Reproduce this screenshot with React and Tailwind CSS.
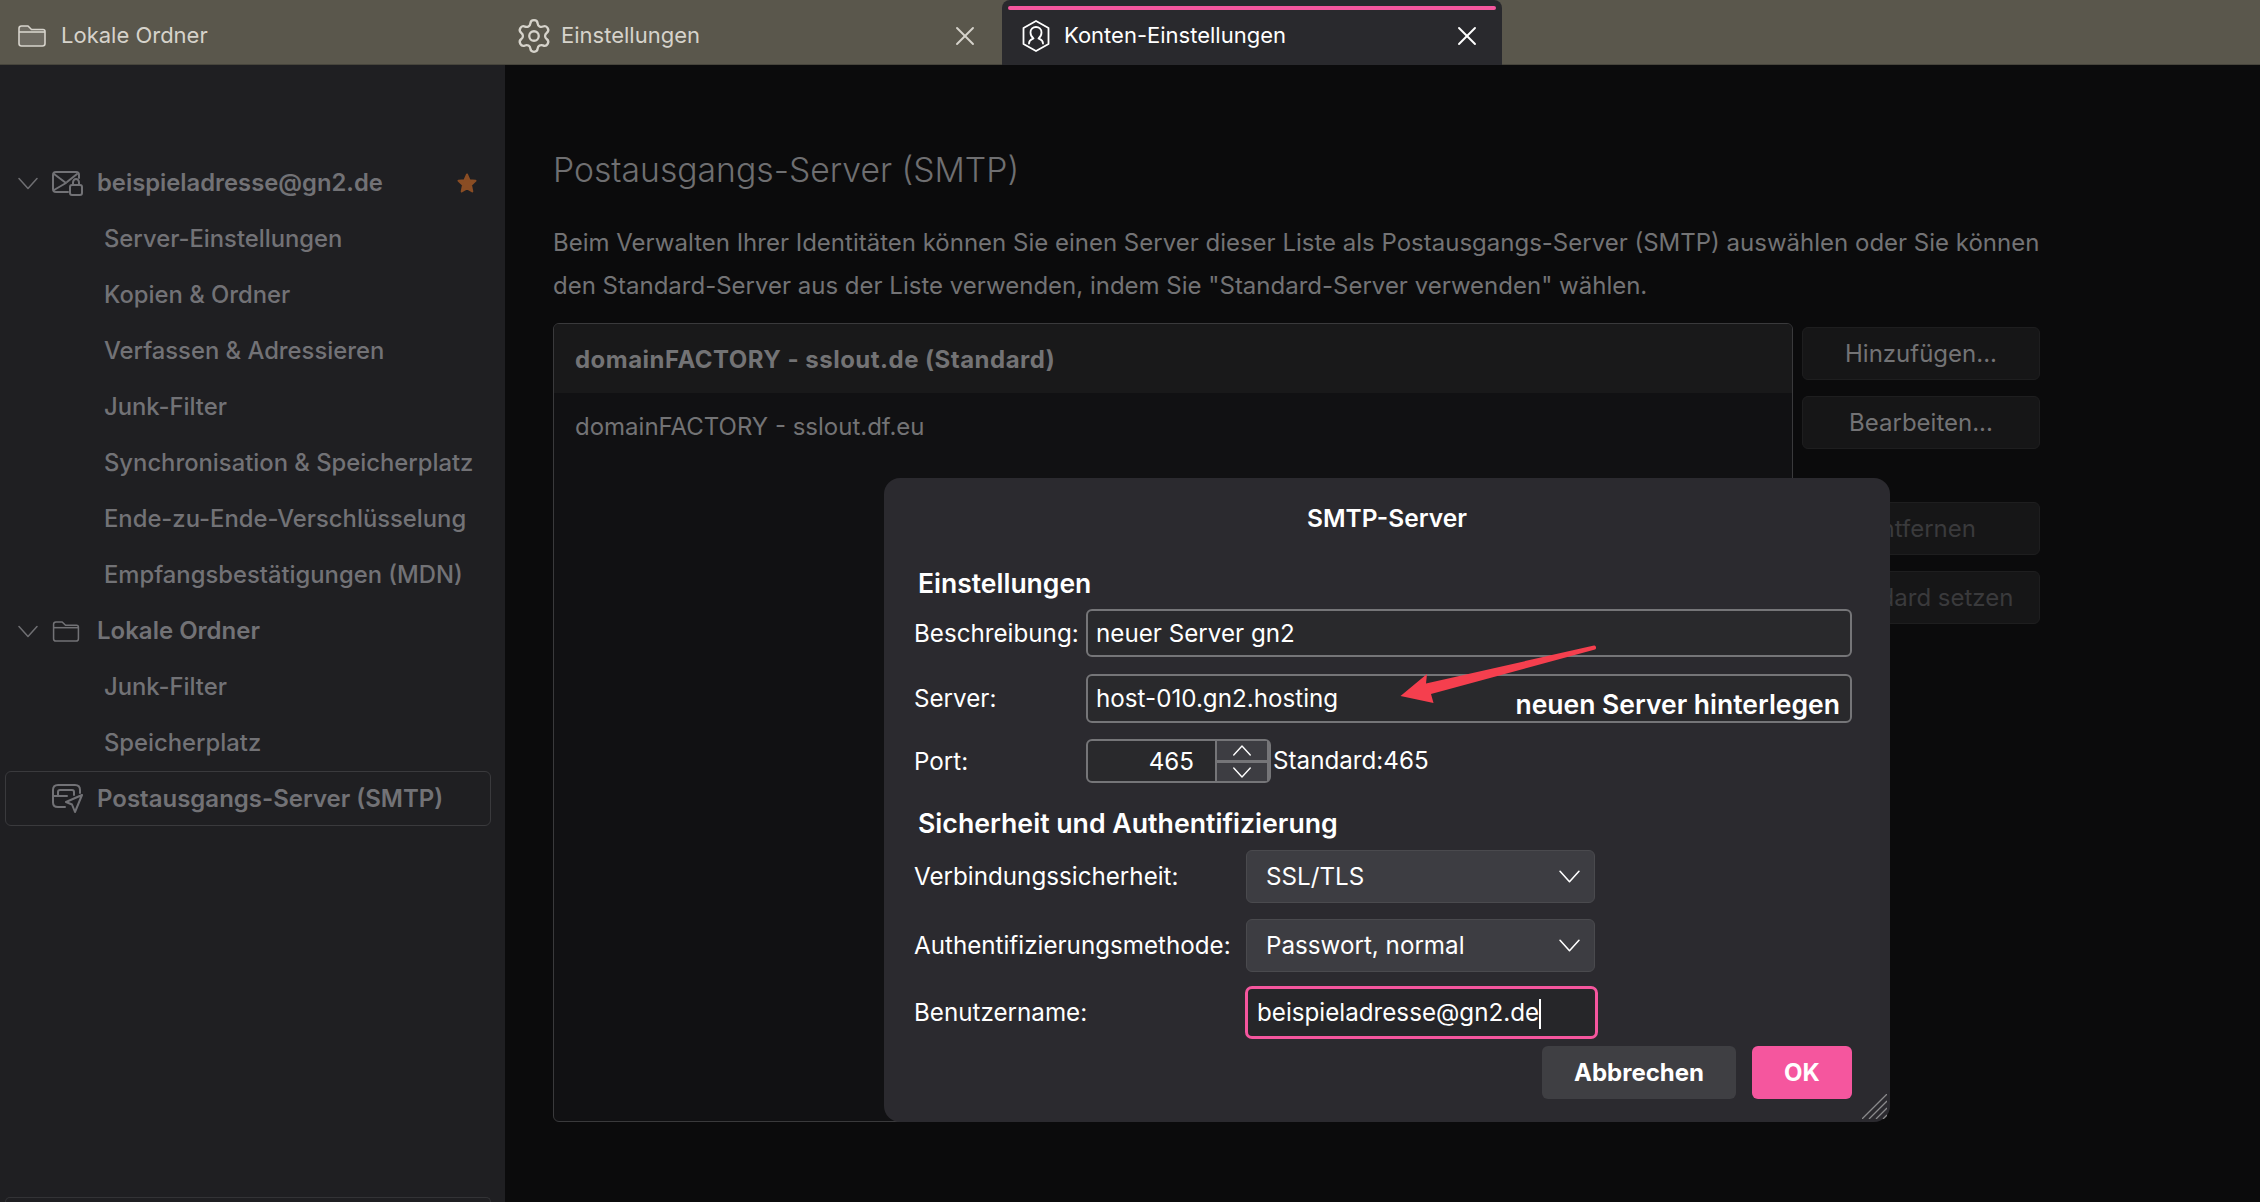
import React from 'react';
import { Settings, X } from 'lucide-react';

const FolderIcon = ({ className, fill = 'none' }) => (
  <svg className={className} viewBox="0 0 28 22" fill={fill} stroke="currentColor" strokeWidth="1.6" strokeLinejoin="round">
    <path d="M1 3.5C1 2 2 1 3.5 1H10l3.5 3.5H25C26 4.5 27 5.5 27 6.5V18.5C27 20 26 21 24.5 21H3.5C2 21 1 20 1 18.5Z" />
    <path d="M1 7H27" fill="none" />
  </svg>
);

const Chev = ({ className, up }) => (
  <svg className={className} viewBox="0 0 20 12" fill="none" stroke="currentColor" strokeWidth="1.5" strokeLinecap="round" strokeLinejoin="round">
    <path d={up ? 'M1 11L10 1L19 11' : 'M1 1L10 11L19 1'} />
  </svg>
);

const AccountIcon = () => (
  <svg className="w-[31px] h-[25px]" viewBox="0 0 31 25" fill="none" stroke="currentColor" strokeWidth="2" strokeLinejoin="round" strokeLinecap="round">
    <path d="M16 21H4C2 21 1 20 1 18V4C1 2 2 1 4 1H24C26 1 27 2 27 4V7" />
    <path d="M2 3L14 12L2 19" />
    <path d="M15 11L25 3" />
    <rect x="18" y="14" width="12" height="10" rx="2" />
    <path d="M21 14V11.500C21 9.500 22.500 8 24 8C25.500 8 27 9.500 27 11.500V14" />
  </svg>
);

const SmtpIcon = () => (
  <svg className="w-[31px] h-[30px]" viewBox="0 0 31 30" fill="none" stroke="currentColor" strokeWidth="2" strokeLinejoin="round" strokeLinecap="round">
    <path d="M13 23H6C2.500 23 1 21.500 1 18.500V6C1 3 2.500 1 6 1H23C26 1 28 3 28 6V9" />
    <path d="M6 11V8C6 6.500 7 6 8 6H20C21.500 6 22 7 22 8V11" />
    <path d="M1 12H15" />
    <path d="M30 11L14 18L20 20.500L23 28Z" />
  </svg>
);

const AccountsTabIcon = () => (
  <svg className="w-[28px] h-[32px]" viewBox="0 0 28 32" fill="none" stroke="currentColor" strokeWidth="1.8" strokeLinejoin="round" strokeLinecap="round">
    <path d="M14 1L26.5 8V24L14 31L1.500 24V8Z" />
    <path d="M7 23.500C7 20 9.500 19.500 11.500 18.500C9.500 17 8.500 14.500 8.500 12.500C8.500 9 11 7 14 7C17 7 19.500 9 19.500 12.500C19.500 14.500 18.500 17 16.500 18.500C18.500 19.500 21 20 21 23.500" />
  </svg>
);

const Star = () => (
  <svg className="w-[20px] h-[20px] text-[#8a4d24]" viewBox="0 0 20 20" fill="currentColor" stroke="currentColor" strokeWidth="2" strokeLinejoin="round">
    <path d="M10 1.500L12.500 7.200L18.500 7.800L14 12L15.300 18.500L10 15.300L4.700 18.500L6 12L1.500 7.800L7.500 7.200Z" />
  </svg>
);

const Tab = ({ icon, label, closable, className = '' }) => (
  <div className={`flex items-center h-[65px] pt-[6px] text-[#d6d3cb] ${className}`}>
    {icon}
    <span className="text-[22px]">{label}</span>
    {closable && <X className="w-[32px] h-[32px] ml-auto" strokeWidth={1.4} />}
  </div>
);

const TabBar = () => (
  <div className="flex h-[65px] shrink-0 bg-[#5a574c] border-b border-[#47453c]">
    <Tab
      className="w-[498px] pl-[18px]"
      icon={<FolderIcon className="w-[28px] h-[22px] mr-[15px] text-[#d6d3cb]" fill="#6f6c63" />}
      label="Lokale Ordner"
    />
    <Tab
      className="w-[504px] pl-[18px] pr-[21px]"
      closable
      icon={<Settings className="w-[38px] h-[38px] mr-[8px] -ml-[1px]" strokeWidth={1.45} />}
      label="Einstellungen"
    />
    <div className="relative flex items-center w-[500px] h-[65px] pt-[6px] pl-[20px] pr-[19px] bg-[#29292d] rounded-t-[8px] text-white">
      <div className="absolute left-[6px] right-[6px] top-[6px] h-[4px] rounded-[2px] bg-[#f5569e]" />
      <AccountsTabIcon />
      <span className="ml-[14px] text-[22px]">Konten-Einstellungen</span>
      <X className="w-[32px] h-[32px] ml-auto" strokeWidth={1.4} />
    </div>
  </div>
);

const Chevron = () => <Chev className="w-[20px] h-[13px] shrink-0 text-[#6f6f73]" />;

const SubItem = ({ children }) => (
  <div className="flex items-center h-[56px] pl-[104px] text-[23.8px] text-[#727276]">{children}</div>
);

const Sidebar = () => (
  <aside className="flex flex-col relative w-[505px] shrink-0 pt-[90px] bg-[#1f1f22] font-medium text-[#727276]">
    <div className="flex items-center h-[56px] pl-[18px] pr-[28px]">
      <Chevron />
      <span className="ml-[14px]"><AccountIcon /></span>
      <span className="ml-[14px] text-[23.8px] font-semibold">beispieladresse@gn2.de</span>
      <span className="ml-auto"><Star /></span>
    </div>
    <SubItem>Server-Einstellungen</SubItem>
    <SubItem>Kopien &amp; Ordner</SubItem>
    <SubItem>Verfassen &amp; Adressieren</SubItem>
    <SubItem>Junk-Filter</SubItem>
    <SubItem>Synchronisation &amp; Speicherplatz</SubItem>
    <SubItem>Ende-zu-Ende-Verschlüsselung</SubItem>
    <SubItem>Empfangsbestätigungen (MDN)</SubItem>
    <div className="flex items-center h-[56px] pl-[18px]">
      <Chevron />
      <span className="ml-[14px]"><FolderIcon className="w-[28px] h-[21px]" /></span>
      <span className="ml-[17px] text-[24px] font-semibold">Lokale Ordner</span>
    </div>
    <SubItem>Junk-Filter</SubItem>
    <SubItem>Speicherplatz</SubItem>
    <div className="flex items-center h-[55px] ml-[5px] w-[486px] pl-[46px] border-[1.5px] border-[#3a3a3d] rounded-[6px]">
      <SmtpIcon />
      <span className="ml-[14px] text-[24px] font-semibold">Postausgangs-Server (SMTP)</span>
    </div>
    <div className="absolute left-[5px] bottom-0 w-[486px] h-[5px] rounded-t-[6px] border-t-[1.5px] border-x-[1.5px] border-[#333336]" />
  </aside>
);

const SideButton = ({ children, muted, className = '' }) => (
  <div className={`flex items-center justify-center w-[238px] h-[53px] rounded-[6px] bg-[#161617] border-[1.5px] border-[#1e1e1f] text-[24px] ${muted ? 'text-[#3a3a3c]' : 'text-[#737375]'} ${className}`}>
    {children}
  </div>
);

const Main = () => (
  <main className="flex-1 flex flex-col pl-[48px] bg-[#0b0b0c]">
    <h1 className="mt-[80px] h-[50px] text-[33.7px] leading-[50px] font-light text-[#6f6f71]">Postausgangs-Server (SMTP)</h1>
    <p className="mt-[26px] w-[1500px] text-[24px] leading-[43px] text-[#737375]">
      Beim Verwalten Ihrer Identitäten können Sie einen Server dieser Liste als Postausgangs-Server (SMTP) auswählen oder Sie können
      <br />
      den Standard-Server aus der Liste verwenden, indem Sie "Standard-Server verwenden" wählen.
    </p>
    <div className="flex gap-[9px] mt-[16px]">
      <div className="flex flex-col w-[1240px] h-[799px] bg-[#111113] border-[1.5px] border-[#3a3a3c] rounded-[6px] overflow-hidden">
        <div className="flex items-center h-[69px] pt-[2px] pl-[21px] bg-[#19191a] text-[24px] font-bold tracking-[0.48px] text-[#737375]">domainFACTORY - sslout.de (Standard)</div>
        <div className="flex items-center h-[66px] pt-[2px] pl-[21px] text-[24px] text-[#737375]">domainFACTORY - sslout.df.eu</div>
      </div>
      <div className="flex flex-col pt-[4px]">
        <SideButton>Hinzufügen...</SideButton>
        <SideButton className="mt-[16px]">Bearbeiten...</SideButton>
        <SideButton muted className="mt-[53px]">Entfernen</SideButton>
        <SideButton muted className="mt-[16px]">Standard setzen</SideButton>
      </div>
    </div>
  </main>
);

const Field = ({ label, children, className = '' }) => (
  <div className={`flex items-center ${className}`}>
    <span className="w-[172px] shrink-0 pt-[2px] text-[24.2px]">{label}</span>
    {children}
  </div>
);

const SelectBox = ({ value, className = '' }) => (
  <div className={`flex items-center w-[349px] h-[53px] pl-[19px] pr-[14px] bg-[#3d3d42] border-[1.5px] border-[#4a4a4e] rounded-[6px] text-[24.2px] ${className}`}>
    <span className="pt-[2px]">{value}</span>
    <Chev className="w-[21px] h-[13px] ml-auto" />
  </div>
);

const TextBox = ({ children, className = '' }) => (
  <div className={`flex items-center h-[48px] pl-[8px] pt-[2px] border-2 border-[#757578] rounded-[6px] bg-[#29292c] text-[24.2px] ${className}`}>
    {children}
  </div>
);

const Dialog = () => (
  <div className="absolute left-[884px] top-[478px] w-[1006px] h-[644px] pl-[30px] bg-[#2b2a2f] rounded-[16px] text-white">
    <div className="flex items-center justify-center h-[80px] -ml-[30px] text-[24.5px] font-semibold">SMTP-Server</div>
    <h2 className="flex items-center h-[51px] pl-[4px] text-[26.5px] font-semibold">Einstellungen</h2>
    <Field label="Beschreibung:">
      <TextBox className="w-[766px]">neuer Server gn2</TextBox>
    </Field>
    <Field label="Server:" className="mt-[17px]">
      <TextBox className="relative w-[766px] h-[49px]">
        host-010.gn2.hosting
        <span className="absolute right-[10px] top-[9px] text-[26.5px] font-semibold">neuen Server hinterlegen</span>
      </TextBox>
    </Field>
    <Field label="Port:" className="mt-[16px]">
      <div className="flex w-[185px] h-[44px] border-2 border-[#757578] rounded-[6px] bg-[#29292c]">
        <span className="flex items-center justify-end w-[127px] pt-[2px] pr-[21px] text-[24.2px]">465</span>
        <div className="flex flex-col items-center justify-around w-[54px] h-full border-x-2 border-[#757578] bg-[#3d3d42]">
          <div className="flex items-center justify-center h-[19px]"><Chev up className="w-[20px] h-[11px]" /></div>
          <div className="w-full h-[3px] bg-[#757578]" />
          <div className="flex items-center justify-center h-[18px]"><Chev className="w-[20px] h-[11px]" /></div>
        </div>
      </div>
      <span className="ml-[2px] text-[24.2px]">Standard:465</span>
    </Field>
    <h2 className="flex items-center h-[54px] mt-[13px] pl-[4px] text-[26.7px] font-semibold">Sicherheit und Authentifizierung</h2>
    <div className="grid grid-cols-[332px_auto] items-center justify-start text-[24.2px]">
      <span className="pt-[2px]">Verbindungssicherheit:</span>
      <SelectBox value="SSL/TLS" />
      <span className="mt-[16px] pt-[2px]">Authentifizierungsmethode:</span>
      <SelectBox value="Passwort, normal" className="mt-[16px]" />
      <span className="mt-[14px] pt-[2px]">Benutzername:</span>
      <div className="flex items-center w-[353px] h-[53px] -ml-[1px] mt-[14px] pl-[9px] pt-[2px] border-[3px] border-[#f5569e] rounded-[7px] bg-[#262629]">
        beispieladresse@gn2.de
        <span className="w-[2px] h-[30px] bg-white" />
      </div>
    </div>
    <div className="flex justify-end gap-[16px] mt-[7px] pr-[38px]">
      <div className="flex items-center justify-center w-[194px] h-[53px] rounded-[6px] bg-[#3f3f43] text-[24px] font-bold">Abbrechen</div>
      <div className="flex items-center justify-center w-[100px] h-[53px] rounded-[6px] bg-[#f5569e] text-[24px] font-bold">OK</div>
    </div>
    <svg className="absolute right-[3px] bottom-[3px] w-[25px] h-[25px] text-[#8a8a8c]" viewBox="0 0 25 25" stroke="currentColor" strokeWidth="1.3">
      <path d="M0 25L25 0M7 25L25 7M14 25L25 14M21 25L25 21" />
    </svg>
  </div>
);

const Arrow = () => (
  <svg className="absolute left-[1395px] top-[640px] w-[210px] h-[70px]" viewBox="0 0 210 70" fill="#f53f4e">
    <path d="M5.500 56L32 34L31 43.500L199 5.500C201 5 202 9 200 9.500L36 54L38.500 63Z" />
  </svg>
);

const App = () => (
  <div className="relative flex flex-col w-[2260px] h-[1202px] overflow-hidden bg-[#0b0b0c] font-['Inter',sans-serif]">
    <TabBar />
    <div className="flex flex-1 min-h-0">
      <Sidebar />
      <Main />
    </div>
    <Dialog />
    <Arrow />
  </div>
);

export default App;
